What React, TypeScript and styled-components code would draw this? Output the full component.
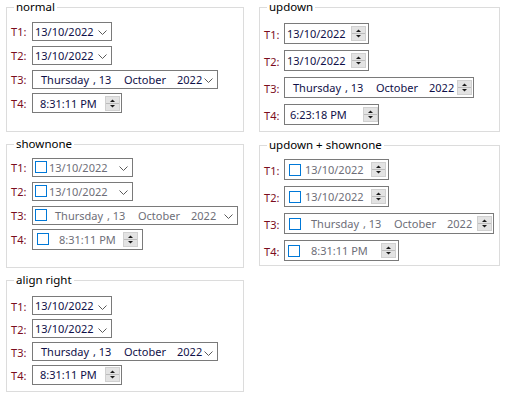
import React from 'react';
import styled, { createGlobalStyle } from 'styled-components';

const GlobalStyle = createGlobalStyle`
  html, body {
    margin: 0;
    padding: 0;
    background: #fff;
  }
  body {
    font-family: 'Noto Sans', 'Segoe UI', sans-serif;
    font-size: 11px;
  }
`;

const Page = styled.div`
  display: flex;
  gap: 15px;
  padding-left: 6px;
  width: 511px;
  height: 402px;
  box-sizing: border-box;
`;

const Column = styled.div<{ $w: number; $gap: number }>`
  display: flex;
  flex-direction: column;
  gap: ${(p) => p.$gap}px;
  width: ${(p) => p.$w}px;
`;

const Group = styled.fieldset<{ $h: number; $pt: number }>`
  margin: 0;
  padding: ${(p) => p.$pt}px 0 0 4px;
  border: 1px solid #dcdcdc;
  height: ${(p) => p.$h}px;
  box-sizing: border-box;
  min-width: 0;
`;

const Title = styled.legend`
  margin-left: 3px;
  padding: 0 2px;
  line-height: 14px;
  font-size: 11.5px;
  color: #000;
`;

const Row = styled.div<{ $h: number }>`
  display: flex;
  align-items: center;
  height: ${(p) => p.$h}px;
`;

const Label = styled.span<{ $w: number }>`
  width: ${(p) => p.$w}px;
  color: #7b0d1e;
  padding-top: 1px;
`;

const Field = styled.div<{ $w: number; $h: number; $pl: number; $dim: boolean }>`
  display: flex;
  align-items: center;
  box-sizing: border-box;
  width: ${(p) => p.$w}px;
  height: ${(p) => p.$h}px;
  padding-left: ${(p) => p.$pl}px;
  border: 1px solid #7a7a7a;
  color: ${(p) => (p.$dim ? '#6e6e78' : '#101048')};
  white-space: nowrap;
`;

const Check = styled.span<{ $mr: number }>`
  width: 12px;
  height: 12px;
  box-sizing: border-box;
  border: 1px solid #0078d7;
  background: #fff;
  margin-right: ${(p) => p.$mr}px;
  flex: none;
`;

const Segment = styled.span<{ $w?: number }>`
  display: inline-block;
  width: ${(p) => (p.$w ? `${p.$w}px` : 'auto')};
`;

const Chevron = styled.svg<{ $mr: number }>`
  margin-left: auto;
  margin-right: ${(p) => p.$mr}px;
  margin-top: 3px;
  flex: none;
`;

const Spinner = styled.svg<{ $mr: number }>`
  margin-left: auto;
  margin-right: ${(p) => p.$mr}px;
  flex: none;
`;

type Ctl = {
  kind: 'drop' | 'spin';
  w: number;
  h: number;
  pl: number;
  mr: number;
  cb?: number;
  long?: boolean;
  text?: string;
};

const Picker = ({ c, dim }: { c: Ctl; dim: boolean }) => (
  <Field $w={c.w} $h={c.h} $pl={c.pl} $dim={dim}>
    {c.cb !== undefined && <Check $mr={c.cb} />}
    {c.long ? (
      <>
        <Segment $w={52}>Thursday</Segment>
        <Segment $w={31}>, 13</Segment>
        <Segment $w={53}>October</Segment>
        <Segment>2022</Segment>
      </>
    ) : (
      <Segment>{c.text}</Segment>
    )}
    {c.kind === 'drop' ? (
      <Chevron $mr={c.mr} width="9" height="5" viewBox="0 0 9 5">
        <polyline points="0.5,0.5 4.5,4.5 8.5,0.5" fill="none" stroke="#5a5a5a" strokeWidth="1" />
      </Chevron>
    ) : (
      <Spinner $mr={c.mr} width="15" height="15" viewBox="0 0 15 15">
        <rect x="0.5" y="0.5" width="14" height="14" fill="#e3e3e3" stroke="#d0d0d0" />
        <line x1="1" y1="7.5" x2="14" y2="7.5" stroke="#bcbcbc" />
        <polygon points="5,6 10,6 7.5,3.5" fill="#1a1a1a" />
        <polygon points="5,9 10,9 7.5,11.5" fill="#1a1a1a" />
      </Spinner>
    )}
  </Field>
);

type SectionProps = {
  title: string;
  h: number;
  pt: number;
  rowH: number;
  lw: number;
  dim?: boolean;
  items: Ctl[];
};

const Section = ({ title, h, pt, rowH, lw, dim = false, items }: SectionProps) => (
  <Group $h={h} $pt={pt}>
    <Title>{title}</Title>
    {items.map((c, i) => (
      <Row key={i} $h={rowH}>
        <Label $w={lw}>T{i + 1}:</Label>
        <Picker c={c} dim={dim} />
      </Row>
    ))}
  </Group>
);

const DATE = '13/10/2022';

const normal: Ctl[] = [
  { kind: 'drop', w: 80, h: 19, pl: 2, mr: 4, text: DATE },
  { kind: 'drop', w: 80, h: 19, pl: 2, mr: 4, text: DATE },
  { kind: 'drop', w: 186, h: 19, pl: 8, mr: 4, long: true },
  { kind: 'spin', w: 90, h: 20, pl: 7, mr: 1, text: '8:31:11 PM' },
];

const updown: Ctl[] = [
  { kind: 'spin', w: 85, h: 21, pl: 2, mr: 2, text: DATE },
  { kind: 'spin', w: 85, h: 21, pl: 2, mr: 2, text: DATE },
  { kind: 'spin', w: 190, h: 21, pl: 8, mr: 1, long: true },
  { kind: 'spin', w: 95, h: 21, pl: 5, mr: 0, text: '6:23:18 PM' },
];

const shownone: Ctl[] = [
  { kind: 'drop', w: 101, h: 19, pl: 2, mr: 4, cb: 2, text: DATE },
  { kind: 'drop', w: 101, h: 19, pl: 2, mr: 4, cb: 2, text: DATE },
  { kind: 'drop', w: 206, h: 19, pl: 2, mr: 4, cb: 8, long: true },
  { kind: 'spin', w: 111, h: 21, pl: 4, mr: 4, cb: 10, text: '8:31:11 PM' },
];

const updownNone: Ctl[] = [
  { kind: 'spin', w: 105, h: 21, pl: 4, mr: 2, cb: 4, text: DATE },
  { kind: 'spin', w: 105, h: 21, pl: 4, mr: 2, cb: 4, text: DATE },
  { kind: 'spin', w: 210, h: 21, pl: 4, mr: 1, cb: 10, long: true },
  { kind: 'spin', w: 115, h: 21, pl: 3, mr: 2, cb: 11, text: '8:31:11 PM' },
];

const App = () => (
  <>
    <GlobalStyle />
    <Page>
      <Column $w={238} $gap={5}>
        <Section title="normal" h={132} pt={5} rowH={24} lw={21} items={normal} />
        <Section title="shownone" h={131} pt={4} rowH={24} lw={21} dim items={shownone} />
        <Section title="align right" h={119} pt={7} rowH={23} lw={21} items={normal} />
      </Column>
      <Column $w={241} $gap={6}>
        <Section title="updown" h={132} pt={6} rowH={27} lw={20} items={updown} />
        <Section title="updown + shownone" h={128} pt={4} rowH={27} lw={20} dim items={updownNone} />
      </Column>
    </Page>
  </>
);

export default App;
